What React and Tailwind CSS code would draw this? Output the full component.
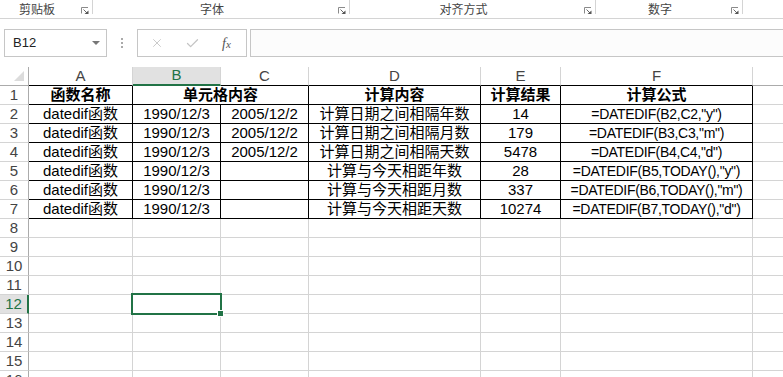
import { X, Check } from "lucide-react";

const font = { fontFamily: '"Liberation Sans", "Noto Sans CJK SC", sans-serif' };
const uiFont = { fontFamily: '"Noto Sans CJK SC", "Liberation Sans", sans-serif' };

const cols = [
    { key: "A", w: "w-[104px]" },
    { key: "B", w: "w-[88px]" },
    { key: "C", w: "w-[88px]" },
    { key: "D", w: "w-[172px]" },
    { key: "E", w: "w-[80px]" },
    { key: "F", w: "w-[192px]" },
    { key: "G", w: "w-[60px]" },
];

const rows = [
    ["datedif函数", "1990/12/3", "2005/12/2", "计算日期之间相隔年数", "14", '=DATEDIF(B2,C2,"y")'],
    ["datedif函数", "1990/12/3", "2005/12/2", "计算日期之间相隔月数", "179", '=DATEDIF(B3,C3,"m")'],
    ["datedif函数", "1990/12/3", "2005/12/2", "计算日期之间相隔天数", "5478", '=DATEDIF(B4,C4,"d")'],
    ["datedif函数", "1990/12/3", "", "计算与今天相距年数", "28", '=DATEDIF(B5,TODAY(),"y")'],
    ["datedif函数", "1990/12/3", "", "计算与今天相距月数", "337", '=DATEDIF(B6,TODAY(),"m")'],
    ["datedif函数", "1990/12/3", "", "计算与今天相距天数", "10274", '=DATEDIF(B7,TODAY(),"d")'],
];

function Launcher() {
    return (
        <svg width="8" height="7" viewBox="0 0 8 7" className="absolute right-[4px] top-[7px]">
            <path d="M0.5 6.5 V0.5 H7" stroke="#8a8a8a" fill="none" />
            <path d="M2.5 2.5 L6 6" stroke="#6a6a6a" />
            <path d="M3.5 7 H7.5 V3.5 Z" fill="#555" />
        </svg>
    );
}

function Group({ label, w }) {
    return (
        <div className={`relative flex h-[18px] ${w} shrink-0`}>
            <div className="flex flex-1 items-center justify-center pr-[18px] text-[12px] text-[#444]">{label}</div>
            <Launcher />
            <div className="h-[14px] w-px bg-[#d4d4d4]" />
        </div>
    );
}

function Cell({ w, children, black, bold, selected, narrow }) {
    return (
        <div
            className={`relative flex h-[19px] shrink-0 items-center justify-center whitespace-nowrap border-r border-b ${w} ${
                black ? "border-black" : "border-[#d4d4d4]"
            } ${bold ? "font-bold" : ""} ${narrow ? "text-[14px] tracking-[-0.3px]" : ""} ${selected ? "z-10" : ""}`}
        >
            {children}
            {selected && (
                <>
                    <div className="absolute left-[-2px] top-[-2px] h-[22px] w-[91px] border-2 border-[#217346]" />
                    <div className="absolute left-[84px] top-[15px] h-[7px] w-[7px] border border-white bg-[#217346]" />
                </>
            )}
        </div>
    );
}

function RowHeader({ n, active }) {
    return (
        <div
            className={`flex h-[19px] w-[29px] shrink-0 items-center justify-center border-b border-[#d4d4d4] ${
                active ? "border-r-2 border-r-[#217346] bg-[#e1e1e1] text-[#217346]" : "border-r border-r-[#ababab] text-[#444]"
            }`}
        >
            {n}
        </div>
    );
}

export default function App() {
    const empty = Array.from({ length: 9 }, (_, i) => i + 8);

    return (
        <div className="h-[377px] w-[783px] overflow-hidden bg-white text-black" style={font}>
            {/* ribbon group labels */}
            <div className="flex h-[19px] border-b border-[#d4d4d4]" style={uiFont}>
                <Group label="剪贴板" w="w-[93px]" />
                <Group label="字体" w="w-[257px]" />
                <Group label="对齐方式" w="w-[246px]" />
                <Group label="数字" w="w-[147px]" />
            </div>

            {/* formula bar */}
            <div className="mt-[10px] flex h-[28px]">
                <div className="ml-[4px] flex w-[103px] items-center justify-between border border-[#c6c6c6] bg-white pl-[8px] pr-[6px] text-[13px] text-[#222]">
                    <span>B12</span>
                    <svg width="8" height="4" viewBox="0 0 8 4">
                        <path d="M0 0 H8 L4 4 Z" fill="#777" />
                    </svg>
                </div>
                <div className="flex w-[30px] flex-col items-center justify-center gap-[2px]">
                    <div className="h-[2px] w-[2px] bg-[#aaa]" />
                    <div className="h-[2px] w-[2px] bg-[#aaa]" />
                    <div className="h-[2px] w-[2px] bg-[#aaa]" />
                </div>
                <div className="flex w-[110px] items-center border border-[#c6c6c6] bg-white">
                    <X size={14} strokeWidth={1.5} className="ml-[12px] text-[#c4c4c4]" />
                    <Check size={15} strokeWidth={2} className="ml-[21px] text-[#c4c4c4]" />
                    <span className="ml-[22px] text-[14px] italic text-[#555]" style={{ fontFamily: '"Liberation Serif", serif' }}>
                        f<span className="text-[11px]">x</span>
                    </span>
                </div>
                <div className="ml-[3px] flex-1 border-y border-l border-[#c6c6c6] bg-[#fcfcfc]" />
            </div>

            {/* column headers */}
            <div className="mt-[10px] flex text-[15px] text-[#444]">
                <div className="relative flex h-[19px] w-[29px] shrink-0 border-r border-b border-[#ababab]">
                    <svg width="10" height="10" viewBox="0 0 10 10" className="absolute right-[4px] bottom-[4px]">
                        <path d="M10 0 V10 H0 Z" fill="#dcdcdc" />
                    </svg>
                </div>
                {cols.map((c) =>
                    c.key === "B" ? (
                        <div
                            key={c.key}
                            className={`flex h-[19px] shrink-0 items-center justify-center border-r border-r-[#d4d4d4] border-b-2 border-b-[#217346] bg-[#e1e1e1] text-[#217346] ${c.w}`}
                        >
                            {c.key}
                        </div>
                    ) : (
                        <div
                            key={c.key}
                            className={`flex h-[19px] shrink-0 items-center justify-center border-r border-b border-r-[#d4d4d4] ${
                                c.key === "G" ? "border-b-[#ababab]" : "border-b-black"
                            } ${c.w}`}
                        >
                            {c.key === "G" ? "" : c.key}
                        </div>
                    )
                )}
            </div>

            {/* row 1 */}
            <div className="flex text-[15px]">
                <RowHeader n={1} />
                <Cell w="w-[104px]" black bold>函数名称</Cell>
                <Cell w="w-[176px]" black bold>单元格内容</Cell>
                <Cell w="w-[172px]" black bold>计算内容</Cell>
                <Cell w="w-[80px]" black bold>计算结果</Cell>
                <Cell w="w-[192px]" black bold>计算公式</Cell>
                <Cell w="w-[60px]" />
            </div>

            {/* rows 2-7 */}
            {rows.map((r, i) => (
                <div key={i} className="flex text-[15px]">
                    <RowHeader n={i + 2} />
                    {r.map((v, j) => (
                        <Cell key={j} w={cols[j].w} black narrow={j === 5}>
                            {v}
                        </Cell>
                    ))}
                    <Cell w="w-[60px]" />
                </div>
            ))}

            {/* empty rows */}
            {empty.map((n) => (
                <div key={n} className="flex text-[15px]">
                    <RowHeader n={n} active={n === 12} />
                    {cols.map((c) => (
                        <Cell key={c.key} w={c.w} selected={n === 12 && c.key === "B"} />
                    ))}
                </div>
            ))}
        </div>
    );
}
